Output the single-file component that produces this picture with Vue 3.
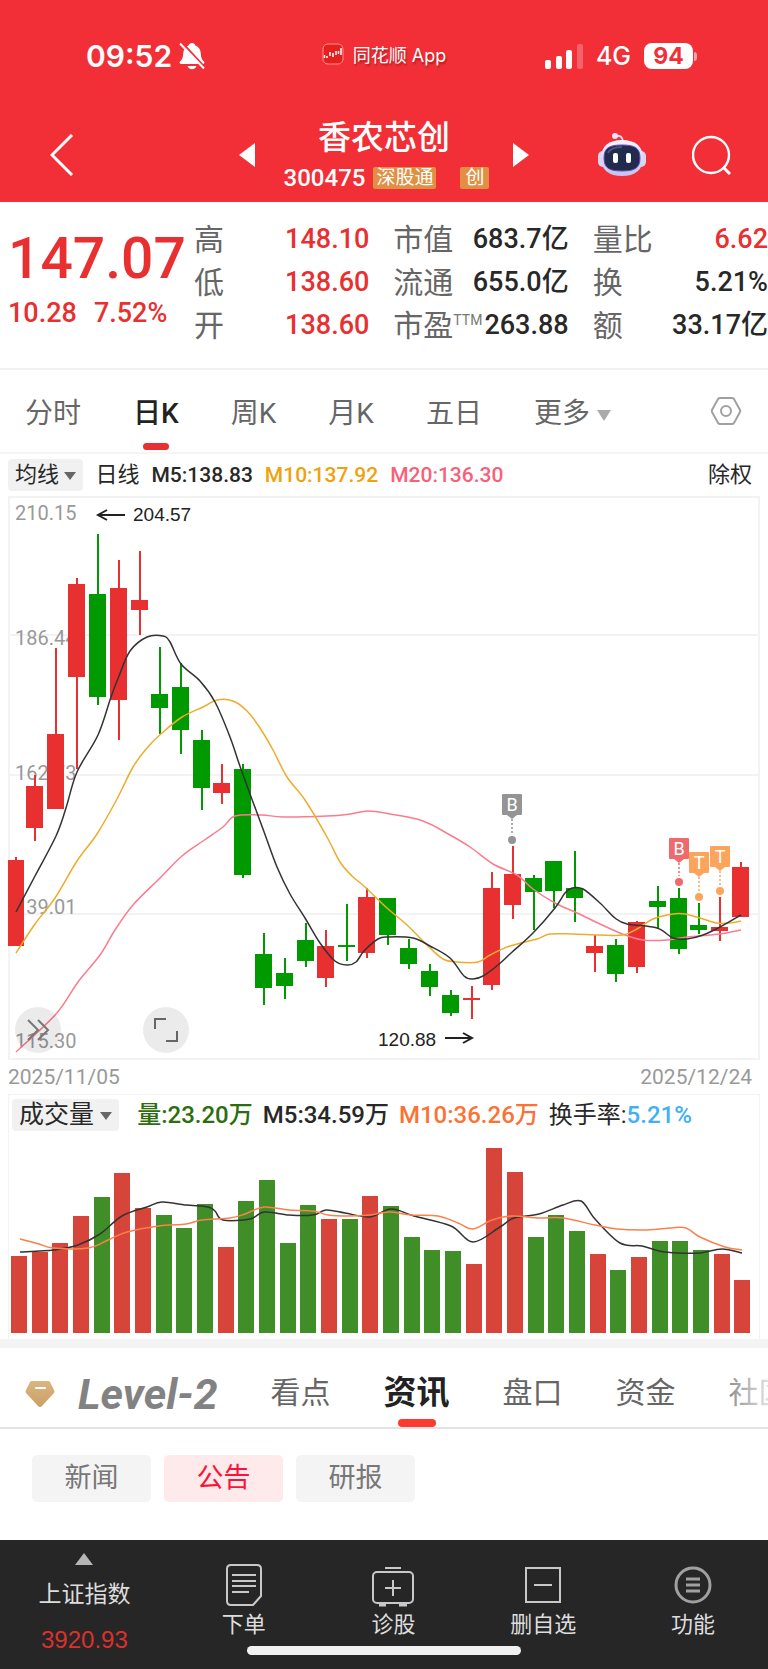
<script setup>
import { ref } from 'vue';

const period = ref('日K');
const periods = ['分时', '日K', '周K', '月K', '五日'];

const section = ref('资讯');
const sections = ['看点', '资讯', '盘口', '资金', '社区'];

const newsType = ref('公告');
const newsTypes = ['新闻', '公告', '研报'];

const stats = [
  { label: '高', value: '148.10', up: true },
  { label: '市值', value: '683.7亿' },
  { label: '量比', value: '6.62', up: true },
  { label: '低', value: '138.60', up: true },
  { label: '流通', value: '655.0亿' },
  { label: '换', value: '5.21%' },
  { label: '开', value: '138.60', up: true },
  { label: '市盈', sup: 'TTM', value: '263.88' },
  { label: '额', value: '33.17亿' },
];

// x center, high, body top, body bottom, low, direction
const candles = [
  [16, 857, 860, 946, 946, 'r'], [35, 775, 786, 828, 841, 'r'], [56, 648, 734, 809, 809, 'r'],
  [77, 578, 584, 677, 769, 'r'], [98, 534, 594, 697, 705, 'g'], [119, 560, 588, 700, 740, 'r'],
  [140, 551, 600, 610, 635, 'r'], [160, 647, 694, 708, 734, 'g'], [181, 663, 687, 730, 754, 'g'],
  [202, 730, 740, 788, 810, 'g'], [222, 764, 783, 793, 804, 'r'], [243, 764, 769, 875, 878, 'g'],
  [264, 933, 954, 988, 1005, 'g'], [285, 958, 973, 986, 999, 'g'], [306, 923, 940, 961, 967, 'g'],
  [326, 930, 946, 978, 987, 'r'], [347, 904, 945, 947, 961, 'g'], [367, 888, 897, 953, 958, 'r'],
  [388, 898, 898, 935, 945, 'g'], [409, 939, 948, 964, 969, 'g'], [430, 964, 971, 987, 996, 'g'],
  [451, 990, 995, 1013, 1016, 'g'], [472, 986, 998, 1000, 1019, 'r'], [492, 872, 888, 985, 990, 'r'],
  [513, 846, 874, 905, 919, 'r'], [534, 875, 878, 892, 930, 'g'], [554, 861, 861, 891, 908, 'g'],
  [575, 851, 888, 898, 922, 'g'], [595, 935, 946, 953, 972, 'r'], [616, 939, 945, 974, 982, 'g'],
  [637, 921, 922, 967, 973, 'r'], [658, 886, 901, 907, 929, 'g'], [679, 888, 898, 949, 954, 'g'],
  [699, 903, 925, 930, 934, 'g'], [720, 897, 927, 931, 941, 'r'], [741, 862, 867, 917, 917, 'r'],
];

const volumes = [
  77, 81, 90, 117, 136, 160, 125, 118, 105, 129, 86, 132, 153, 90, 128, 114, 114, 137,
  127, 96, 83, 82, 69, 185, 161, 96, 118, 102, 79, 63, 76, 92, 92, 83, 79, 53,
];

const m5 = [[16, 912], [35, 876], [56, 836], [66, 808], [77, 772], [98, 735], [111, 697], [119, 676], [130, 651], [147, 637], [163, 636], [170, 642], [181, 664], [200, 681], [215, 702], [230, 737], [242, 772], [263, 829], [277, 867], [290, 894], [305, 918], [320, 943], [335, 961], [347, 965], [356, 962], [364, 951], [378, 939], [388, 937], [413, 938], [430, 946], [450, 958], [464, 976], [473, 979], [483, 976], [498, 965], [510, 954], [533, 933], [555, 908], [565, 893], [572, 888], [583, 889], [600, 903], [615, 918], [627, 924], [657, 928], [673, 938], [687, 939], [703, 935], [720, 927], [741, 915]];
const m10 = [[16, 953], [35, 924], [55, 898], [77, 861], [97, 834], [117, 799], [133, 767], [147, 748], [162, 733], [182, 717], [203, 707], [217, 700], [233, 701], [247, 711], [260, 728], [273, 750], [287, 777], [305, 800], [327, 837], [340, 862], [352, 876], [365, 887], [387, 908], [407, 925], [427, 945], [443, 959], [457, 962], [478, 962], [490, 955], [510, 946], [537, 939], [550, 934], [573, 934], [600, 935], [623, 935], [637, 929], [653, 919], [673, 914], [685, 914], [700, 918], [717, 923], [730, 923], [741, 921]];
const m20 = [[16, 1052], [56, 1014], [78, 982], [100, 955], [115, 930], [133, 905], [160, 878], [182, 856], [203, 841], [223, 827], [235, 816], [262, 815], [283, 817], [327, 816], [350, 814], [368, 811], [390, 814], [423, 821], [450, 835], [470, 847], [493, 864], [517, 875], [533, 889], [555, 903], [575, 912], [600, 924], [625, 935], [643, 940], [667, 940], [687, 937], [720, 934], [741, 930]];
const v5 = [[20, 1251], [54, 1249], [78, 1244], [100, 1233], [122, 1215], [147, 1206], [162, 1201], [186, 1204], [208, 1206], [215, 1210], [223, 1219], [250, 1218], [264, 1211], [289, 1214], [313, 1214], [326, 1209], [345, 1212], [370, 1216], [391, 1208], [414, 1215], [451, 1225], [473, 1241], [500, 1226], [514, 1217], [539, 1213], [563, 1204], [581, 1200], [595, 1218], [620, 1242], [642, 1245], [659, 1250], [678, 1252], [700, 1252], [722, 1248], [742, 1252]];
const v10 = [[20, 1238], [39, 1243], [53, 1247], [88, 1247], [108, 1239], [127, 1231], [159, 1225], [186, 1223], [202, 1219], [230, 1217], [245, 1213], [264, 1206], [289, 1209], [313, 1210], [328, 1214], [348, 1215], [370, 1214], [389, 1211], [411, 1214], [438, 1215], [458, 1222], [473, 1228], [492, 1219], [512, 1215], [539, 1217], [563, 1217], [595, 1224], [617, 1228], [647, 1229], [671, 1227], [686, 1227], [700, 1236], [725, 1246], [742, 1249]];

const priceLabels = [
  { text: '210.15', y: 520 },
  { text: '186.44', y: 645 },
  { text: '162.73', y: 780 },
  { text: '139.01', y: 914 },
  { text: '115.30', y: 1048 },
];

const markers = [
  { text: 'B', x: 512, y: 794, dot: 840, color: '#949494' },
  { text: 'B', x: 679, y: 838, dot: 882, color: '#ef6a6d' },
  { text: 'T', x: 699, y: 852, dot: 897, color: '#fda45c' },
  { text: 'T', x: 720, y: 846, dot: 891, color: '#fda45c' },
];

const tools = ['下单', '诊股', '删自选', '功能'];

// smooth line through all the points
function smooth(pts) {
  let d = `M${pts[0][0]} ${pts[0][1]}`;
  for (let i = 0; i < pts.length - 1; i++) {
    const a = pts[i - 1] || pts[i];
    const b = pts[i];
    const c = pts[i + 1];
    const e = pts[i + 2] || c;
    d += ` C${b[0] + (c[0] - a[0]) / 6} ${b[1] + (c[1] - a[1]) / 6} ${c[0] - (e[0] - b[0]) / 6} ${c[1] - (e[1] - b[1]) / 6} ${c[0]} ${c[1]}`;
  }
  return d;
}
</script>

<template>
  <div class="page">
    <header class="top">
      <div class="status">
        <div class="statusLeft">
          <span>09:52</span>
          <svg class="bell" width="26" height="28" viewBox="0 0 26 28">
            <path d="M13 1c1.700 0 3 1 3.400 2.400 3.400 1.200 5.200 4.200 5.400 8 .2 4.600 1.400 6.200 3.200 8.200.8 1 .4 2.400-1 2.400H2C.6 22 .2 20.600 1 19.600c1.800-2 3-3.600 3.200-8.200.2-3.800 2-6.800 5.400-8C10 2 11.300 1 13 1z" fill="#fff" />
            <path d="M8.500 24h9c-.6 2-2.300 3.200-4.500 3.200S9.100 26 8.500 24z" fill="#fff" />
            <path d="M2.500 0l24 26" stroke="#f22f37" stroke-width="2" />
            <path d="M1 1.500l24 25" stroke="#fff" stroke-width="2" />
          </svg>
        </div>
        <div class="statusApp">
          <svg width="22" height="22" viewBox="0 0 22 22">
            <rect x="1" y="1" width="20" height="20" rx="5" fill="#e5201f" stroke="#ff8f8f" />
            <path d="M2.500 12v3M5 13v2M8 9v4M11 10v4M14 8v4M16.500 8v3M19 5v7" stroke="#fff" stroke-width="1.500" />
          </svg>
          <span>同花顺 App</span>
        </div>
        <div class="statusRight">
          <svg width="38" height="25" viewBox="0 0 38 25" fill="#fff">
            <rect y="16" width="6" height="9" rx="2" />
            <rect x="11" y="12" width="6" height="13" rx="2" />
            <rect x="21" y="6" width="6" height="19" rx="2" />
            <rect x="32" y="0" width="6" height="25" rx="2" opacity=".25" />
          </svg>
          <span class="net">4G</span>
          <span class="battery">94</span>
        </div>
      </div>

      <div class="nav">
        <div class="navLeft">
          <button class="iconButton" aria-label="返回">
            <svg width="24" height="42" viewBox="0 0 24 42"><path d="M22 1L2 21l20 20" fill="none" stroke="#fff" stroke-width="3" /></svg>
          </button>
        </div>
        <div class="stock">
          <button class="iconButton" aria-label="上一只">
            <svg width="16" height="24" viewBox="0 0 16 24"><path d="M16 0v24L0 12z" fill="#fff" /></svg>
          </button>
          <div class="stockInfo">
            <h1>香农芯创</h1>
            <div class="stockCode">
              <span>300475</span>
              <span class="tag">深股通</span>
              <span class="tag tagLast">创</span>
            </div>
          </div>
          <button class="iconButton" aria-label="下一只">
            <svg width="16" height="24" viewBox="0 0 16 24"><path d="M0 0v24l16-12z" fill="#fff" /></svg>
          </button>
        </div>
        <div class="navRight">
          <button class="iconButton" aria-label="助手">
            <svg width="48" height="44" viewBox="0 0 48 44">
              <defs>
                <linearGradient id="shell" x1="0" y1="0" x2="0" y2="1">
                  <stop offset="0" stop-color="#f4f4ff" />
                  <stop offset="1" stop-color="#c3c3ee" />
                </linearGradient>
              </defs>
              <path d="M17 3c5-1 8 1 8 6" fill="none" stroke="#e9d9ee" stroke-width="2" />
              <circle cx="17" cy="3" r="3" fill="#f0e6f6" />
              <rect x="0" y="18" width="10" height="16" rx="5" fill="#d5d6f4" />
              <rect x="38" y="18" width="10" height="16" rx="5" fill="#d5d6f4" />
              <path d="M24 7c13 0 21 6 21 18S37 43 24 43 3 37 3 25 11 7 24 7z" fill="url(#shell)" />
              <path d="M24 12c13 0 18 3 18 13s-5 13-18 13S6 35 6 25s5-13 18-13z" fill="#212b4d" stroke="#6c4ab6" stroke-width="1" />
              <path d="M10 20c2-4 6-6 14-6" fill="none" stroke="#4a5778" stroke-width="2" />
              <rect x="15" y="20" width="5" height="10" rx="2" fill="#fff" />
              <rect x="28" y="20" width="5" height="10" rx="2" fill="#fff" />
            </svg>
          </button>
          <button class="iconButton" aria-label="搜索">
            <svg width="40" height="40" viewBox="0 0 40 40" fill="none" stroke="#fff" stroke-width="2.400">
              <circle cx="19" cy="20" r="18" />
              <path d="M31 32l7 7" stroke-width="3" />
            </svg>
          </button>
        </div>
      </div>
    </header>

    <section class="quote">
      <div class="price">
        <strong>147.07</strong>
        <p><span>10.28</span><span>7.52%</span></p>
      </div>
      <dl class="stats">
        <div v-for="s in stats" :key="s.label">
          <dt>{{ s.label }}<sup v-if="s.sup">{{ s.sup }}</sup></dt>
          <dd :class="{ up: s.up }">{{ s.value }}</dd>
        </div>
      </dl>
    </section>

    <nav class="periods">
      <button v-for="p in periods" :key="p" :class="{ active: period === p }" @click="period = p">{{ p }}</button>
      <button class="more">更多 <i class="caret"></i></button>
      <button class="iconButton setting" aria-label="设置">
        <svg width="32" height="30" viewBox="0 0 32 30" fill="none" stroke="#a0a0a0" stroke-width="2">
          <path d="M10 2h12q1 0 2 1l6 11q.5 1 0 2l-6 11q-1 1-2 1H10q-1 0-2-1L2 16q-.5-1 0-2L8 3q1-1 2-1z" />
          <circle cx="16" cy="15" r="5" />
        </svg>
      </button>
    </nav>

    <div class="averages">
      <button class="pick">均线 <i class="caret"></i></button>
      <span class="line">日线</span>
      <span>M5:138.83</span>
      <span class="gold">M10:137.92</span>
      <span class="pink">M20:136.30</span>
      <button class="rights">除权</button>
    </div>

    <div class="chart">
      <svg viewBox="8 496 752 564">
        <g fill="none" stroke="#f3f3f3" stroke-width="2">
          <rect x="9" y="497" width="750" height="562" />
          <path d="M8 635h752M8 775h752M8 914h752" />
        </g>
        <text v-for="l in priceLabels" :key="l.text" class="priceLabel" x="15" :y="l.y">{{ l.text }}</text>
        <g v-for="c in candles" :key="c[0]" :class="c[5] === 'r' ? 'rise' : 'fall'">
          <rect :x="c[0] - 1" :y="c[1]" width="2" :height="c[4] - c[1]" />
          <rect :x="Math.max(c[0] - 9, 8)" :y="c[2]" :width="c[0] < 20 ? 16 : 17" :height="c[3] - c[2]" />
        </g>
        <g class="curve">
          <path :d="smooth(m20)" stroke="#fb7b8f" />
          <path :d="smooth(m10)" stroke="#eeac2c" />
          <path :d="smooth(m5)" stroke="#333" />
        </g>
        <g fill="none" stroke="#222" stroke-width="2">
          <path d="M125 515H98M107 510l-9 5 9 5" />
          <path d="M445 1038h27M463 1033l9 5-9 5" />
        </g>
        <text class="extreme" x="133" y="521">204.57</text>
        <text class="extreme" x="378" y="1046">120.88</text>
        <g v-for="m in markers" :key="m.x" :fill="m.color">
          <path :d="`M${m.x} ${m.y + 25}V${m.dot - 6}`" :stroke="m.color" stroke-width="1.500" stroke-dasharray="2 2" />
          <rect :x="m.x - 10" :y="m.y" width="20" height="21" rx="1" />
          <path :d="`M${m.x - 5} ${m.y + 21}h10l-5 4z`" />
          <circle :cx="m.x" :cy="m.dot" r="4" />
          <text class="markerText" :x="m.x" :y="m.y + 17">{{ m.text }}</text>
        </g>
      </svg>
      <div class="chartButtons">
        <button aria-label="展开">
          <svg width="24" height="22" viewBox="0 0 24 22" fill="none" stroke="#777" stroke-width="2"><path d="M2 1l10 10L2 21M12 1l10 10-10 10" /></svg>
        </button>
        <button aria-label="全屏">
          <svg width="26" height="24" viewBox="0 0 26 24" fill="none" stroke="#666" stroke-width="2"><path d="M2 11V1h11M24 13v10H13" /></svg>
        </button>
      </div>
    </div>
    <div class="dates">
      <time>2025/11/05</time>
      <time>2025/12/24</time>
    </div>

    <div class="volume">
      <div class="volumeInfo">
        <button class="pick">成交量 <i class="caret"></i></button>
        <span class="green">量:23.20万</span>
        <span>M5:34.59万</span>
        <span class="orange">M10:36.26万</span>
        <span class="turnover">换手率:<b>5.21%</b></span>
      </div>
      <svg viewBox="9 1138 750 200">
        <rect v-for="(v, i) in volumes" :key="i" :x="11 + Math.round(i * 20.670)" :y="1332 - v" width="16" :height="v" :class="candles[i][5] === 'r' ? 'volRise' : 'volFall'" />
        <g class="curve">
          <path :d="smooth(v5)" stroke="#333" />
          <path :d="smooth(v10)" stroke="#fb804c" />
        </g>
      </svg>
    </div>

    <nav class="sections">
      <svg class="gem" width="30" height="28" viewBox="0 0 30 28">
        <defs>
          <linearGradient id="gold" x1="0" y1="0" x2="0" y2="1">
            <stop offset="0" stop-color="#dbb581" />
            <stop offset="1" stop-color="#c9a065" />
          </linearGradient>
        </defs>
        <path d="M7 1h16q1 0 2 1l4 8q1 2 0 3L17 26q-2 2-4 0L1 13q-1-1 0-3l4-8q1-1 2-1z" fill="url(#gold)" />
        <path d="M11 8h9" stroke="#fff" stroke-width="2" stroke-linecap="round" />
      </svg>
      <button class="level">Level-2</button>
      <button v-for="s in sections" :key="s" :class="{ active: section === s }" @click="section = s">{{ s }}</button>
    </nav>

    <div class="chips">
      <button v-for="n in newsTypes" :key="n" :class="{ active: newsType === n }" @click="newsType = n">{{ n }}</button>
    </div>

    <footer class="toolbar">
      <button class="index">
        <i class="caretUp"></i>
        <span>上证指数</span>
        <b>3920.93</b>
      </button>
      <button v-for="(t, i) in tools" :key="t" class="tool">
        <svg width="44" height="44" viewBox="0 0 44 44" fill="none" stroke="#c8c8c8" stroke-width="2">
          <g v-if="i === 0">
            <path d="M9 2h26q4 0 4 4v27l-8 9H9q-4 0-4-4V6q0-4 4-4z" />
            <path d="M10 12h24M10 18h24M10 23h24M10 29h17" />
          </g>
          <g v-else-if="i === 1">
            <rect x="2" y="9" width="40" height="31" rx="4" />
            <path d="M14 5h16M22 17v16M14 25h16" />
            <path d="M8 42h7M28 42h8" stroke-width="3" />
          </g>
          <g v-else-if="i === 2">
            <rect x="5" y="5" width="34" height="34" />
            <path d="M13 22h18" />
          </g>
          <g v-else stroke="#a0a0a0" stroke-width="3">
            <circle cx="22" cy="22" r="17" />
            <path d="M15 16h14M15 22h14M15 28h14" />
          </g>
        </svg>
        <span>{{ t }}</span>
      </button>
      <div class="home"></div>
    </footer>
  </div>
</template>

<style>
body {
  background: #fff;
}
</style>

<style scoped>
.page {
  font-family: Roboto, "Noto Sans CJK SC", sans-serif;
  color: #282828;
  background: #fff;
  overflow: hidden;
}
button {
  border: none;
  background: none;
  padding: 0;
  margin: 0;
  font: inherit;
  color: inherit;
  cursor: pointer;
  white-space: nowrap;
}
svg {
  display: block;
  flex: none;
}

.top {
  background: #f22f37;
  color: #fff;
}
.status {
  display: grid;
  grid-template-columns: 1fr auto 1fr;
  align-items: center;
  height: 112px;
  font-family: Inter, "Noto Sans CJK SC", sans-serif;
}
.statusLeft {
  display: flex;
  align-items: center;
  gap: 7px;
  padding-left: 86px;
  font-size: 30px;
  font-weight: 600;
}
.statusApp {
  display: flex;
  align-items: center;
  gap: 9px;
  font-size: 18px;
  padding-bottom: 4px;
  text-shadow: 1px 2px 2px #8008;
}
.statusRight {
  display: flex;
  align-items: center;
  justify-content: flex-end;
  gap: 13px;
  padding-right: 75px;
}
.net {
  font-size: 25px;
  font-weight: 500;
}
.battery {
  position: relative;
  width: 49px;
  border-radius: 8px;
  background: #fff;
  color: #f22f37;
  font-size: 23px;
  line-height: 26px;
  font-weight: 700;
  text-align: center;
}
.battery::after {
  content: "";
  position: absolute;
  left: 50px;
  top: 9px;
  width: 3px;
  height: 9px;
  border-radius: 0 4px 4px 0;
  background: #ffffff88;
}
.iconButton {
  display: flex;
}
.nav {
  display: grid;
  grid-template-columns: 1fr auto 1fr;
  align-items: center;
  height: 86px;
  padding-bottom: 4px;
}
.navLeft {
  padding-left: 50px;
}
.navRight {
  display: flex;
  justify-content: flex-end;
  align-items: center;
  gap: 46px;
  padding-right: 36px;
}
.stock {
  display: flex;
  align-items: center;
  gap: 24px;
}
.stockInfo {
  padding-top: 2px;
  text-align: center;
}
h1 {
  margin: 0;
  font-size: 33px;
  line-height: 44px;
  font-weight: 500;
}
.stockCode {
  display: flex;
  align-items: center;
  gap: 8px;
  padding-left: 5px;
  font-size: 24px;
  line-height: 36px;
  font-weight: 500;
}
.tag {
  background: #e28f44;
  font-size: 19px;
  line-height: 22px;
  font-weight: 400;
  padding: 0 3px;
  border-radius: 2px;
}
.tagLast {
  margin-left: 16px;
  padding: 0 5px;
}

.quote {
  display: grid;
  grid-template-columns: 186fr 574fr;
  padding: 16px 0 21px 8px;
  border-bottom: 2px solid #f3f3f3;
}
.price {
  color: #e83031;
  font-weight: 500;
}
.price strong {
  display: block;
  font-size: 57px;
  line-height: 82px;
  font-weight: 500;
}
.price p {
  display: flex;
  gap: 17px;
  margin: 0;
  font-size: 27px;
  line-height: 26px;
}
.stats {
  display: grid;
  grid-template-columns: repeat(3, 1fr);
  column-gap: 24px;
  margin: 0;
}
.stats div {
  display: flex;
  justify-content: space-between;
  white-space: nowrap;
  line-height: 43px;
}
dt {
  font-size: 30px;
  color: #666;
}
dd {
  margin: 0;
  font-size: 27px;
  font-weight: 500;
}
dd.up {
  color: #e83031;
}
sup {
  font-size: 14px;
  line-height: 0;
  color: #777;
}

.periods {
  display: flex;
  align-items: stretch;
  gap: 52px;
  height: 82px;
  padding: 0 26px 0 25px;
  border-bottom: 2px solid #f5f5f5;
  font-size: 28px;
  color: #666;
}
.periods .active,
.sections .active {
  position: relative;
  color: #222;
  font-weight: 500;
}
.periods .active::after {
  content: "";
  position: absolute;
  left: 50%;
  bottom: 2px;
  width: 26px;
  height: 7px;
  margin-left: -13px;
  border-radius: 4px;
  background: #e83031;
}
.caret {
  display: inline-block;
  border: 6px solid transparent;
  border-top: 8px solid #666;
  border-bottom: 0;
  vertical-align: middle;
}
.more .caret {
  border-width: 11px 7px 0;
  border-top-color: #aaa;
}
.setting {
  align-items: center;
  margin-left: auto;
}

.averages {
  display: flex;
  align-items: center;
  gap: 12px;
  height: 42px;
  padding: 0 16px 0 8px;
  font-size: 21px;
  line-height: 32px;
  font-weight: 500;
}
.pick {
  background: #f1f1f1;
  border-radius: 4px;
  padding: 0 7px;
  line-height: 32px;
  font-size: 22px;
  font-weight: 400;
}
.line,
.rights {
  font-size: 22px;
  font-weight: 400;
}
.rights {
  margin-left: auto;
}
.gold {
  color: #efa20d;
}
.pink {
  color: #fa5f79;
}

.chart {
  position: relative;
  margin: 0 8px;
}
.chart > svg,
.volume > svg {
  width: 100%;
}
.priceLabel {
  font-size: 20px;
  fill: #999;
}
.rise {
  fill: #e83031;
}
.fall {
  fill: #009900;
}
.volRise {
  fill: #d7443a;
}
.volFall {
  fill: #3f8e28;
}
.curve {
  fill: none;
  stroke-width: 1.5;
}
.extreme {
  font-family: "Liberation Sans", sans-serif;
  font-size: 19px;
  fill: #222;
}
.markerText {
  font-size: 18px;
  fill: #fff;
  text-anchor: middle;
}
.chartButtons {
  position: absolute;
  left: 7px;
  bottom: 7px;
  display: flex;
  gap: 82px;
}
.chartButtons button {
  display: flex;
  align-items: center;
  justify-content: center;
  width: 46px;
  height: 46px;
  border-radius: 50%;
  background: rgba(0, 0, 0, 0.08);
}
.dates {
  display: flex;
  justify-content: space-between;
  padding: 0 16px 0 8px;
  font-size: 21px;
  line-height: 34px;
  color: #999;
}

.volume {
  margin: 0 8px;
  border: 1px solid #f3f3f3;
  border-bottom: none;
}
.volumeInfo {
  display: flex;
  align-items: center;
  gap: 10px;
  height: 40px;
  padding: 0 0 4px 3px;
  font-size: 24px;
  line-height: 32px;
  font-weight: 500;
  white-space: nowrap;
}
.volumeInfo .pick {
  font-size: 25px;
  margin-right: 8px;
}
.green {
  color: #2c6e0e;
}
.orange {
  color: #fb7333;
}
.turnover {
  font-weight: 400;
}
.turnover b {
  font-weight: 500;
  color: #42aff8;
}

.sections {
  position: relative;
  display: flex;
  gap: 53px;
  height: 75px;
  padding: 4px 0 0 25px;
  border-top: 9px solid #f4f4f4;
  border-bottom: 2px solid #e3e3e3;
  font-size: 30px;
  color: #666;
}
.sections::after {
  content: "";
  position: absolute;
  right: 0;
  top: 0;
  bottom: 0;
  width: 40px;
  background: linear-gradient(to right, #fff4, #fffc);
}
.gem {
  align-self: center;
  margin: 8px -30px 0 0;
}
.level {
  padding-top: 8px;
  font-size: 43px;
  font-weight: 700;
  font-style: italic;
  color: #828282;
}
.sections .active {
  font-size: 33px;
  font-weight: 700;
}
.sections .active::after {
  content: "";
  position: absolute;
  left: 50%;
  bottom: 0;
  width: 38px;
  height: 8px;
  margin-left: -19px;
  border-radius: 4px;
  background: #fc3a30;
}

.chips {
  display: flex;
  gap: 13px;
  padding: 26px 32px 38px;
}
.chips button {
  width: 119px;
  border-radius: 5px;
  background: #f4f4f4;
  color: #777;
  font-size: 27px;
  line-height: 47px;
}
.chips .active {
  background: #fee9eb;
  color: #fa1437;
}

.toolbar {
  position: relative;
  display: grid;
  grid-template-columns: 169fr 150fr 150fr 150fr 150fr;
  height: 129px;
  background: #262626;
  color: #ddd;
  font-size: 22px;
  line-height: 30px;
}
.toolbar button {
  display: flex;
  flex-direction: column;
  align-items: center;
}
.toolbar .index {
  padding-top: 13px;
  font-size: 23px;
}
.index b {
  margin-top: 15px;
  font-family: "Liberation Sans", sans-serif;
  font-size: 24px;
  font-weight: 400;
  color: #dc302f;
}
.caretUp {
  margin-bottom: 15px;
  border: 9px solid transparent;
  border-bottom: 12px solid #b5b5b5;
  border-top: 0;
}
.toolbar .tool {
  padding-top: 23px;
  gap: 3px;
}
.home {
  position: absolute;
  left: 50%;
  bottom: 14px;
  width: 274px;
  height: 9px;
  margin-left: -137px;
  border-radius: 5px;
  background: #f1f1f1;
}
</style>
